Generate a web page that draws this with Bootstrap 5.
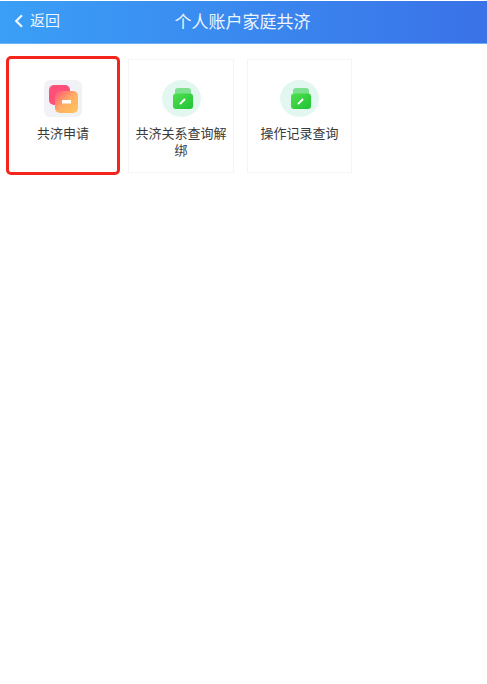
<!DOCTYPE html>
<html lang="zh">
<head>
<meta charset="utf-8">
<title>个人账户家庭共济</title>
<link href="https://cdn.jsdelivr.net/npm/bootstrap@5.3.0/dist/css/bootstrap.min.css" rel="stylesheet">
<style>
body{font-family:"Liberation Sans","Noto Sans CJK SC",sans-serif;background:#fff;width:487px;height:684px;overflow:hidden}
.top-bar{height:42px;margin-top:1px;background:linear-gradient(90deg,#3a9ff6,#3a72e8);color:#eef5ff;position:relative;border-bottom:1px solid #6fb0f5;box-sizing:content-box}
.back-link{font-size:15px;color:#eef5ff;padding-left:14px;gap:6px;line-height:1;padding-bottom:3px;position:relative;z-index:1}
.bar-title{font-size:17px;left:0;right:0;top:0;bottom:0;position:absolute;padding-top:2px;padding-right:2px}
.tile-row{padding:15px 0 0 9px;gap:11px}
.tile{width:106px;height:114px;border:1px solid #f3f5f5;padding-top:20px;font-size:13px;line-height:17px;color:#3a3a3a;text-align:center}
.tile-wide{width:105px;margin-left:2px}
.tile-on{border-color:transparent;outline:3px solid #f3251c;border-radius:2px;width:108px;height:113px}
.tile-text{margin-top:8px;padding:0 6px;word-break:break-all}
.art{width:39px;height:37px;flex:none}
</style>
</head>
<body>
<header class="top-bar d-flex align-items-center">
  <span class="back-link d-flex align-items-center">
    <svg width="10" height="14" viewBox="0 0 10 14"><path d="M8 1.200 2.200 7 8 12.800" fill="none" stroke="#eef5ff" stroke-width="2.200"/></svg>
    <span>返回</span>
  </span>
  <div class="bar-title d-flex align-items-center justify-content-center">个人账户家庭共济</div>
</header>
<main class="tile-row d-flex align-items-start">
  <div class="tile tile-on d-flex flex-column align-items-center">
    <svg class="art" viewBox="0 0 39 37">
      <defs>
        <linearGradient id="warm" x1="0" y1="0" x2="1" y2="1"><stop offset="0" stop-color="#ff4f7c"/><stop offset=".5" stop-color="#ffae62"/><stop offset="1" stop-color="#ffc75c"/></linearGradient>
        <linearGradient id="leaf" x1="0" y1="0" x2="1" y2="1"><stop offset="0" stop-color="#4fe04f"/><stop offset="1" stop-color="#1fc234"/></linearGradient>
      </defs>
      <rect width="38" height="37" rx="6" fill="#f0f2f6"/>
      <rect x="5" y="5" width="21" height="20" rx="5" fill="#fe5079"/>
      <rect x="11" y="11" width="23" height="22" rx="5" fill="url(#warm)"/>
      <rect x="18" y="20" width="9" height="3.500" fill="#fff"/>
    </svg>
    <div class="tile-text">共济申请</div>
  </div>
  <div class="tile d-flex flex-column align-items-center">
    <svg class="art" viewBox="0 0 39 37">
      <ellipse cx="19.500" cy="18.500" rx="19.500" ry="18.500" fill="#e2f7ef"/>
      <path d="M13 11a3 3 0 0 1 3-3h10a3 3 0 0 1 3 3v3H13z" fill="#7fe08f"/>
      <rect x="11" y="13.500" width="20" height="15.500" rx="3" fill="url(#leaf)"/>
      <path d="M18.500 23.500 22.500 19.500" stroke="#fff" stroke-width="1.800" stroke-linecap="round"/>
    </svg>
    <div class="tile-text">共济关系查询解绑</div>
  </div>
  <div class="tile tile-wide d-flex flex-column align-items-center">
    <svg class="art" viewBox="0 0 39 37">
      <ellipse cx="19.500" cy="18.500" rx="19.500" ry="18.500" fill="#e2f7ef"/>
      <path d="M13 11a3 3 0 0 1 3-3h10a3 3 0 0 1 3 3v3H13z" fill="#7fe08f"/>
      <rect x="11" y="13.500" width="20" height="15.500" rx="3" fill="url(#leaf)"/>
      <path d="M18.500 23.500 22.500 19.500" stroke="#fff" stroke-width="1.800" stroke-linecap="round"/>
    </svg>
    <div class="tile-text">操作记录查询</div>
  </div>
</main>
<script src="https://cdn.jsdelivr.net/npm/bootstrap@5.3.0/dist/js/bootstrap.bundle.min.js"></script>
</body>
</html>
